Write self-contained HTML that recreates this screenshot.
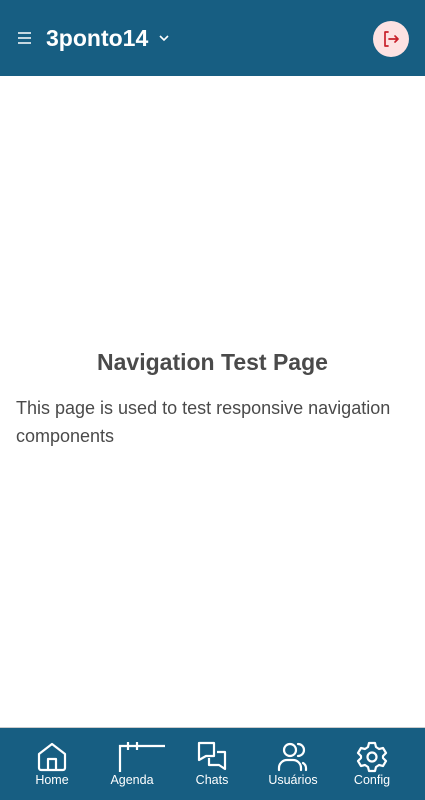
<!DOCTYPE html>
<html><head><style>
body{margin:0;width:425px;height:800px;position:relative;background:#fff;font-family:"Liberation Sans",Arial,sans-serif;overflow:hidden}
.hdr{position:absolute;left:0;top:0;width:425px;height:76px;background:#175e82;color:#fff}
.nav{position:absolute;left:0;top:727px;width:425px;height:73px;background:#175e82;border-top:1px solid #ccc;box-sizing:border-box}
.it{position:absolute;top:0;width:80px;text-align:center;color:#fff;font-size:12.5px}
.it svg{position:absolute;left:24px;top:13px}
.it span{position:absolute;left:0;right:0;top:45px}
h1{position:absolute;left:0;right:0;top:349px;margin:0;text-align:center;font-size:23px;color:#4a4a4a}
p{position:absolute;left:16px;top:394px;margin:0;width:400px;font-size:18px;line-height:28px;color:#4a4a4a}
</style></head><body>
<div class="hdr">
<svg style="position:absolute;left:17px;top:31px" width="16" height="14" viewBox="0 0 16 14" stroke="#fff" stroke-width="1.6"><path d="M1 2h13M1 7h13M1 12h13"/></svg>
<div style="position:absolute;left:46px;top:25px;font-size:23px;font-weight:bold">3ponto14</div>
<svg style="position:absolute;left:158px;top:34px" width="12" height="8" viewBox="0 0 12 8" fill="none" stroke="#fff" stroke-width="1.6"><path d="M2 2l4 4 4-4"/></svg>
<div style="position:absolute;left:373px;top:21px;width:36px;height:36px;border-radius:50%;background:#fde2e2"></div>
<svg style="position:absolute;left:382px;top:30px" width="18" height="18" viewBox="0 0 18 18" fill="none" stroke="#c8202a" stroke-width="1.7" stroke-linecap="round" stroke-linejoin="round"><path d="M6 2H3v14h3M7 9h9M13 6l3 3-3 3"/></svg>
</div>
<h1>Navigation Test Page</h1>
<p>This page is used to test responsive navigation components</p>
<div class="nav">
<div class="it" style="left:12px"><svg width="32" height="32" viewBox="0 0 32 32" fill="none" stroke="#fff" stroke-width="2.2" stroke-linejoin="round"><path d="M3 13L16 3l13 10v14a2 2 0 0 1-2 2H5a2 2 0 0 1-2-2z"/><path d="M12 29V18h8v11"/></svg><span>Home</span></div>
<div class="it" style="left:92px"><svg style="left:26px;top:14px" width="48" height="32" viewBox="0 0 48 32" fill="none" stroke="#fff" stroke-width="2.2"><path d="M2 30V4h45M10 0v8M19 0v8"/></svg><span>Agenda</span></div>
<div class="it" style="left:172px"><svg width="32" height="32" viewBox="0 0 32 32" fill="none" stroke="#fff" stroke-width="2.2" stroke-linejoin="round"><path d="M3 2h15v13H10l-7 4z"/><path d="M21 11h8v17l-6-4h-10v-7"/></svg><span>Chats</span></div>
<div class="it" style="left:253px"><svg width="32" height="32" viewBox="0 0 32 32" fill="none" stroke="#fff" stroke-width="2.2" stroke-linecap="round"><circle cx="13" cy="9" r="6"/><path d="M2 29v-2a8 8 0 0 1 8-8h6a8 8 0 0 1 8 8v2M21 3a6 6 0 0 1 0 12M29 29v-2a6 6 0 0 0-3-5"/></svg><span>Usuários</span></div>
<div class="it" style="left:332px"><svg width="32" height="32" viewBox="0 0 32 32" fill="none" stroke="#fff" stroke-width="2.2" stroke-linejoin="round"><path d="M13 2h6l1 4 3 2 4-1 3 5-3 3v2l3 3-3 5-4-1-3 2-1 4h-6l-1-4-3-2-4 1-3-5 3-3v-2l-3-3 3-5 4 1 3-2z"/><circle cx="16" cy="16" r="4.5"/></svg><span>Config</span></div>
</div>
</body></html>
